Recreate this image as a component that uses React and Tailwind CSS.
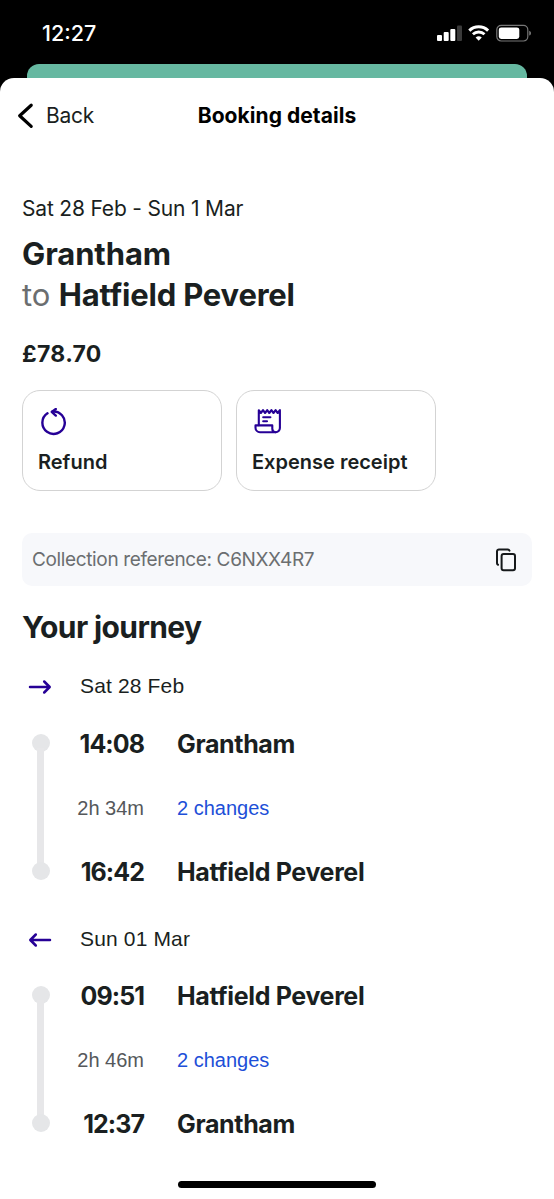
const journeys = [
  {
    date: 'Sat 28 Feb',
    direction: 'out',
    from: { time: '14:08', station: 'Grantham' },
    to: { time: '16:42', station: 'Hatfield Peverel' },
    duration: '2h 34m',
    changes: '2 changes',
  },
  {
    date: 'Sun 01 Mar',
    direction: 'return',
    from: { time: '09:51', station: 'Hatfield Peverel' },
    to: { time: '12:37', station: 'Grantham' },
    duration: '2h 46m',
    changes: '2 changes',
  },
]

const StatusBar = () => (
  <div className="flex h-16 items-start justify-between pr-[22px] pl-[42px]">
    <span className="mt-5 text-[21.5px] leading-[27px] font-medium text-white">12:27</span>
    <div className="mt-6 flex items-center">
      {/* Signal */}
      <svg width="26" height="18" viewBox="0 0 26 18" fill="#fff">
        <rect x="0" y="11" width="5" height="6" rx="1" />
        <rect x="6.7" y="8" width="5" height="9" rx="1" />
        <rect x="13.3" y="5" width="5" height="12" rx="1" />
        <rect x="20" y="1.5" width="5" height="15.5" rx="1" fill="#3a3a3a" />
      </svg>
      {/* Wifi */}
      <svg className="ml-[5px]" width="22" height="18" viewBox="0 0 22 18" fill="none" stroke="#fff">
        <path d="M1.3 6.6a13.6 13.6 0 0 1 18.8 0" strokeWidth="3" />
        <path d="M4.9 10.3a8.4 8.4 0 0 1 11.6 0" strokeWidth="2.8" />
        <path d="M10.7 16.8 7.6 13.6a4.5 4.5 0 0 1 6.2 0z" fill="#fff" stroke="none" />
      </svg>
      {/* Battery */}
      <svg className="ml-[6px]" width="36" height="18" viewBox="0 0 36 18">
        <rect x="0.8" y="1.4" width="31" height="15.6" rx="4.4" fill="none" stroke="#777" strokeWidth="1.2" />
        <rect x="2.8" y="3.4" width="20.5" height="11.6" rx="2.4" fill="#fff" />
        <path d="M33.2 6.8c1.2.4 1.8 1.3 1.8 2.4s-.6 2-1.8 2.4z" fill="#777" />
      </svg>
    </div>
  </div>
)

const RefundIcon = () => (
  <svg width="30" height="28" viewBox="0 0 30 28" fill="none" stroke="#260096" strokeWidth="2.4" strokeLinecap="round" strokeLinejoin="round">
    <path d="M9.5 5.3a11.2 11.2 0 1 0 4.7-1.7" />
    <path d="M17.8 1l-4.1 2.9 4.1 3.7" />
  </svg>
)

const ReceiptIcon = () => (
  <svg width="30" height="28" viewBox="0 0 30 28" fill="none" stroke="#260096" strokeWidth="2.1" strokeLinecap="round" strokeLinejoin="round">
    <path d="M6.8 17.2V2.2l2.1 2.8 2.1-2.8 2.1 2.8 2.1-2.8 2.1 2.8 2.1-2.8 2.1 2.8 2.1-2.8 2.1 2.8 2.2-2.8V20a4.2 4.2 0 0 1-4.3 4.2" />
    <path d="M23.6 24.2H8a4.5 4.5 0 0 1-4.5-4.5v-2.3h16.8v3.4c0 2 1.3 3.4 3.3 3.4z" />
    <path d="M11.2 9.2h7.2M11.2 13.3h3.8" />
  </svg>
)

const CopyIcon = () => (
  <svg width="24" height="26" viewBox="0 0 24 26" fill="none" stroke="#16191b" strokeWidth="2" strokeLinecap="round" strokeLinejoin="round">
    <rect x="7.6" y="6.9" width="13.4" height="16.4" rx="2" />
    <path d="M4 17.8a1.6 1.6 0 0 1-1-1.5V4.4a2 2 0 0 1 2-2h8.6a2.2 2.2 0 0 1 1.9 1.3" />
  </svg>
)

const Arrow = ({ back }) => (
  <svg className={back ? 'rotate-180' : ''} width="24" height="16" viewBox="0 0 24 16" fill="none" stroke="#260096" strokeWidth="2.5" strokeLinecap="round" strokeLinejoin="round">
    <path d="M2 8h19.6M16.2 2.5 21.7 8l-5.5 5.5" />
  </svg>
)

const Stop = ({ time, station }) => (
  <div className="flex h-8 items-center text-[25px] leading-8 font-bold">
    <span className="w-[67px] text-right tracking-[-0.95px]">{time}</span>
    <span className="ml-[33px] tracking-[-0.35px]">{station}</span>
  </div>
)

const Journey = ({ journey }) => (
  <div>
    <div className="flex h-7 items-center font-[Liberation_Sans,sans-serif] text-[21px]">
      <div className="w-[52px] pt-[2px] pl-[6px]">
        <Arrow back={journey.direction === 'return'} />
      </div>
      <span className="ml-[6px] tracking-[0.15px]">{journey.date}</span>
    </div>
    <div className="mt-[27.5px] flex">
      <div className="ml-[9.5px] flex w-[18px] flex-col items-center pt-[6px] pb-[8px]">
        <div className="size-[18px] rounded-full bg-[#e5e6e8]" />
        <div className="-my-1 w-[7px] flex-1 bg-[#e7e7e9]" />
        <div className="size-[18px] rounded-full bg-[#e5e6e8]" />
      </div>
      <div className="ml-[27.5px]">
        <Stop {...journey.from} />
        <div className="my-8 flex h-8 items-center font-[Liberation_Sans,sans-serif] text-[20px]">
          <span className="w-[67px] text-right text-[#55585b]">{journey.duration}</span>
          <span className="ml-[33px] text-[#1d4fd8]">{journey.changes}</span>
        </div>
        <Stop {...journey.to} />
      </div>
    </div>
  </div>
)

const App = () => {
  return (
    <div className="flex h-[1199px] w-[554px] flex-col overflow-hidden bg-black font-[Inter,sans-serif] text-[#1a1f21]">
      <StatusBar />

      {/* Edge of the screen behind the sheet */}
      <div className="mx-[27px] h-[14px] shrink-0 rounded-t-[12px] bg-[#66b8a1]" />

      <div className="flex flex-1 flex-col rounded-t-[14px] bg-white">
        <div className="grid h-[75px] grid-cols-3 items-center text-[21px]">
          <div className="flex items-center pl-4">
            <svg width="20" height="28" viewBox="0 0 20 28" fill="none" stroke="#000" strokeWidth="3.2" strokeLinecap="round" strokeLinejoin="round">
              <path d="M15.2 3.2 3.7 13.8l11.5 10.6" />
            </svg>
            <span className="ml-[10px] tracking-[-0.3px]">Back</span>
          </div>
          <h1 className="text-center font-bold tracking-[0.05px] whitespace-nowrap text-black">Booking details</h1>
        </div>

        <div className="px-[22px] pt-[41px]">
          <p className="text-[21px] leading-[30px] tracking-[-0.18px]">Sat 28 Feb - Sun 1 Mar</p>
          <h2 className="mt-[9px] text-[31px] leading-[41px] font-bold">
            <span className="tracking-[-0.1px]">Grantham</span>
            <br />
            <span className="font-normal text-[#6b6e70]">to</span>{' '}
            <span className="ml-px tracking-[-0.2px]">Hatfield Peverel</span>
          </h2>
          <p className="mt-[23px] text-[23px] leading-[32px] font-bold tracking-[0.3px]">£78.70</p>

          {/* Actions */}
          <div className="mt-5 flex gap-[14px]">
            <button className="flex h-[101px] w-[200px] flex-col items-start rounded-[18px] border-[1.5px] border-[#d3d3d3] pt-[17px] pl-[15px]">
              <RefundIcon />
              <span className="mt-3 text-[20px] leading-[28px] font-semibold">Refund</span>
            </button>
            <button className="flex h-[101px] w-[200px] flex-col items-start rounded-[18px] border-[1.5px] border-[#d3d3d3] pt-[17px] pl-[15px]">
              <ReceiptIcon />
              <span className="mt-3 text-[20px] leading-[28px] font-semibold">Expense receipt</span>
            </button>
          </div>

          <div className="mt-[42px] flex h-[53px] items-center justify-between rounded-[10px] bg-[#f7f8fb] pr-[14px] pl-[10px] text-[19px] tracking-[-0.36px] text-[#6b6e70]">
            <span className="pt-[2px]">Collection reference: C6NXX4R7</span>
            <CopyIcon />
          </div>

          <h2 className="mt-[21px] mb-[24px] text-[30px] leading-[41px] font-bold tracking-[-0.6px]">Your journey</h2>
          <div className="flex flex-col gap-[37px]">
            {journeys.map((journey) => (
              <Journey key={journey.date} journey={journey} />
            ))}
          </div>
        </div>

        {/* Home indicator */}
        <div className="mx-auto mt-auto mb-[11px] h-[7px] w-[198px] rounded-full bg-black" />
      </div>
    </div>
  )
}

export default App
